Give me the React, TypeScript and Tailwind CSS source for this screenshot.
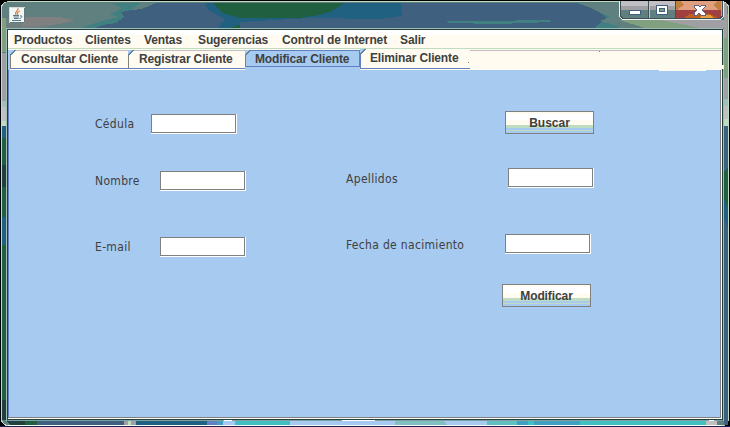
import type { ReactNode } from "react";

function Frame() {
  return (
    <svg className="absolute inset-0" width="730" height="427" shapeRendering="crispEdges">
      <rect width="730" height="427" fill="#000008" />
      <rect x="1" y="1" width="728" height="425" rx="7" fill="#c0dcc0" />
      <rect x="2" y="2" width="726" height="423" rx="6" fill="#608080" />
      <path d="M0 1.500H730" stroke="#000" />
      <path d="M2 28V18H73V21L60 24L40 28Z" fill="#708080" />
      <path d="M22 17H60L73 21L60 24L22 27Z" fill="#808080" />
      <path d="M112 3H141L132 9L121 14L124 18L108 28H80L102 21L118 17L110 14L122 8Z" fill="#408080" />
      <path d="M156 3H607V28H94L103 25L116 23L124 17L121 12L132 10L142 9Z" fill="#406080" />
      <path d="M205 3H401L402 17L394 21L380 28H218L225 19L208 10Z" fill="#206080" />
      <path d="M212 3H345L330 12L319 15L300 18H240L222 13Z" fill="#206040" />
      <path d="M230 28L238 25L251 28Z" fill="#206040" />
      <path d="M240 22L310 18L380 19L402 16V28H240Z" fill="#406080" />
      <path d="M447 21H482L550 20L551 22L500 24L448 23Z" fill="#408080" />
      <path d="M576 3H600L619 18L620 28H594L607 18L597 10Z" fill="#408080" />
      <path d="M580 3H619V28H625L600 21L610 17Z" fill="#608080" />
      <path d="M619 20H660L700 28H645Z" fill="#80a080" />
      <path d="M661 20H724V28H700Z" fill="#a0a0a4" />
      <rect x="2" y="18" width="4" height="34" fill="#80a080" />
      <rect x="2" y="53" width="4" height="48" fill="#a0a0a4" />
      <rect x="2" y="101" width="4" height="6" fill="#a0c0c0" />
      <rect x="2" y="107" width="4" height="14" fill="#c0c0c0" />
      <rect x="2" y="121" width="4" height="5" fill="#c0dcc0" />
      <rect x="2" y="126" width="4" height="12" fill="#206080" />
      <rect x="2" y="138" width="4" height="27" fill="#206040" />
      <rect x="2" y="165" width="4" height="22" fill="#204040" />
      <rect x="2" y="187" width="4" height="30" fill="#206040" />
      <rect x="2" y="217" width="4" height="28" fill="#206080" />
      <rect x="2" y="245" width="4" height="155" fill="#206040" />
      <rect x="2" y="400" width="4" height="20" fill="#204040" />
      <rect x="724" y="14" width="4" height="65" fill="#80a080" />
      <rect x="724" y="3" width="3" height="35" fill="#a0a0a4" />
      <rect x="724" y="78" width="4" height="21" fill="#a0a0a4" />
      <rect x="724" y="99" width="4" height="7" fill="#a0c0c0" />
      <rect x="724" y="106" width="4" height="13" fill="#c0c0c0" />
      <rect x="724" y="119" width="4" height="7" fill="#c0dcc0" />
      <rect x="724" y="126" width="4" height="299" fill="#406080" />
      <path d="M724 171L728 167V207L724 199Z" fill="#206040" />
      <path d="M724 199L728 207V228L724 218Z" fill="#206080" />
      <rect x="728" y="8" width="1" height="140" fill="#c0dcc0" />
      <rect x="729" y="8" width="1" height="419" fill="#000" />
      <path d="M6 421H25V425H10Z" fill="#204040" />
      <rect x="25" y="421" width="12" height="4" fill="#206040" />
      <rect x="37" y="421" width="87" height="4" fill="#406080" />
      <rect x="124" y="421" width="12" height="4" fill="#a0a0a4" />
      <rect x="128" y="420" width="3" height="5" fill="#c0dcc0" />
      <rect x="136" y="421" width="71" height="4" fill="#206080" />
      <rect x="207" y="421" width="10" height="4" fill="#6080c0" />
      <rect x="217" y="421" width="6" height="4" fill="#40a0c0" />
      <rect x="223" y="421" width="13" height="4" fill="#a6caf0" />
      <rect x="235" y="421" width="55" height="4" fill="#40c0c0" />
      <rect x="290" y="421" width="197" height="4" fill="#a6caf0" />
      <path d="M395 421H443L447 425H395Z" fill="#80c0c0" />
      <rect x="487" y="421" width="30" height="4" fill="#60c0c0" />
      <rect x="517" y="421" width="67" height="4" fill="#40a0c0" />
      <rect x="528" y="421" width="6" height="4" fill="#40c0c0" />
      <rect x="580" y="421" width="126" height="4" fill="#40c0c0" />
      <rect x="706" y="421" width="11" height="4" fill="#c0c0c0" />
      <path d="M8 420.500H722" stroke="#80a0a4" />
      <path d="M224 420.500H232M342 420.500H375M709 420.500H714" stroke="#fff" />
      <path d="M8 425.500H722" stroke="#f6fff8" />
      <path d="M0 426.500H730" stroke="#202050" />
      <path d="M7 1.500H722" stroke="#c0dcc0" />
      <path d="M0 0.500H730" stroke="#000" />
      <path d="M6.500 28V421M7 28.500H723M723.500 29V421" stroke="#a0bdb5" />
    </svg>
  );
}

function JavaIcon() {
  return (
    <svg className="mt-[7px] ml-[8px]" width="16" height="16" viewBox="0 0 16 16">
      <rect x=".5" y=".5" width="15" height="15" fill="#f4f6f3" stroke="#d3dbd8" />
      <path d="M1 15.500H15.500V1" fill="none" stroke="#607b80" />
      <path d="M9 1C10 4 5 4 7 8M11 4C8 5 8 6 9 8" fill="none" stroke="#d47f45" strokeWidth="1.200" />
      <path d="M4 8.500H10M4.500 10H10M5 11.500H9.500M3 13.500H12M11 9C14 8 13 11 10.500 11.500" fill="none" stroke="#52798c" />
    </svg>
  );
}

function WindowControls() {
  return (
    <svg className="mr-[6px] ml-auto" width="105" height="21" viewBox="0 0 105 21" shapeRendering="crispEdges">
      <path d="M1 1H103V16Q103 18 101 18H4Q1 18 1 15Z" fill="#608080" />
      <path d="M1 1H57V6H1Z" fill="#c0c0c4" />
      <path d="M1 6H57V10H1Z" fill="#a0a0a4" />
      <path d="M57 1H103V10H57Z" fill="#e0a080" />
      <path d="M57 1H62L65 5L58 10H57ZM103 1H99L94 5L100 10H103Z" fill="#c08040" />
      <path d="M57 10H103V18H57Z" fill="#a04040" />
      <path d="M65 18L71 14H91L99 18Z" fill="#c06020" />
      <path d="M80 18L83 15H91L95 18Z" fill="#e0a040" />
      <path d="M102.500 1V17" stroke="#e0a040" />
      <path d="M.5 1V16L3.500 19.500H101L104.500 16V1" fill="none" stroke="#e8efec" />
      <path d="M1.500 1V16L4 18.500H101L103.500 16V1M29.500 1V18M56.500 1V18" fill="none" stroke="#405058" />
      <path d="M30.500 1V18" stroke="#bdc7c7" />
      <rect x="10.500" y="10.500" width="11" height="4" fill="#fff" stroke="#406080" />
      <rect x="37.500" y="5.500" width="11" height="9" fill="#fff" stroke="#406080" />
      <rect x="40.500" y="8.500" width="5" height="3" fill="#80a080" stroke="#406080" />
      <path d="M75 5H79L81 7L83 5H86V7L83 10L86 13V15H82L80 13L78 15H75V13L78 10L75 7Z" fill="#fff" stroke="#606080" />
    </svg>
  );
}

function Tab({ children, className }: { children: ReactNode; className: string }) {
  return (
    <div className={`relative shrink-0 tracking-[-0.14px] whitespace-nowrap ${className}`}>
      <svg className="absolute -top-px -left-px" width="6" height="6" shapeRendering="crispEdges">
        <path d="M0 0H6L0 6Z" fill="#a6caf0" />
        <path d="M0 5.500L5.500 0" stroke="#6080a0" />
      </svg>
      {children}
    </div>
  );
}

function Field({ className = "" }: { className?: string }) {
  return (
    <div className={`h-5 w-[86px] shrink-0 border-r border-b border-white ${className}`}>
      <input className="block h-[19px] w-[85px] rounded-none border border-[#808080] bg-white px-1 text-xs outline-none" />
    </div>
  );
}

function Button({ children, className = "" }: { children: string; className?: string }) {
  return (
    <button
      className={`h-[23px] w-[89px] shrink-0 border border-[#808080] bg-[linear-gradient(#fffbf0_0_2px,#fff_2px_8px,#fffbf0_8px_13px,#c0dcc0_13px_16px,#a6caf0_16px_18px,#c0dcc0_18px_19px,#a6caf0_19px)] pt-px text-center font-['Liberation_Sans',sans-serif] text-xs leading-[20px] font-bold ${className}`}
    >
      {children}
    </button>
  );
}

export default function App() {
  return (
    <div className="relative h-[427px] w-[730px] overflow-hidden font-['Liberation_Sans',sans-serif] text-xs font-bold text-[#404040]">
      <Frame />
      <div className="relative flex h-full flex-col pl-[7px]">
        <header className="flex h-[29px] shrink-0 items-start">
          <div className="-ml-[7px] pl-px"><JavaIcon /></div>
          <WindowControls />
        </header>
        <main className="relative flex h-[391px] w-[716px] flex-col border border-[#204040] bg-[#fffbf0]">
          <nav className="flex h-[19px] shrink-0 border-b border-[#c0dcc0] bg-[linear-gradient(#fff_0_5px,#fffbf0_5px)] pl-[6px] leading-[20px] tracking-[-0.12px] whitespace-nowrap">
            <span className="w-[71px]">Productos</span>
            <span className="w-[59px]">Clientes</span>
            <span className="w-[54px]">Ventas</span>
            <span className="w-[84px]">Sugerencias</span>
            <span className="w-[118px]">Control de Internet</span>
            <span>Salir</span>
          </nav>
          <div className="flex h-[21px] shrink-0 pt-px">
            <div className="h-5 w-[2px] bg-[#a6caf0]" />
            <Tab className="h-[19px] w-[118px] border-t border-b border-l border-t-[#c0c0c0] border-b-[#6080c0] border-l-[#808080] pl-[10px] leading-[16px]">Consultar Cliente</Tab>
            <Tab className="h-[19px] w-[117px] border-t border-b border-l border-t-[#c0c0c0] border-b-[#6080c0] border-l-[#808080] pl-[10px] leading-[16px]">Registrar Cliente</Tab>
            <div className="h-5 w-[115px] bg-[#a6caf0]">
              <Tab className="h-[17px] border border-[#6080c0] pl-[9px] leading-[16px]">Modificar Cliente</Tab>
            </div>
            <Tab className="h-[19px] w-[110px] border-b border-l border-[#6080c0] pl-[9px] leading-[17px]">Eliminar Cliente</Tab>
            <div className="h-px flex-1 bg-[#c0c0c0]" />
          </div>
          <section className="mr-px mb-px flex-1 border-r border-b border-l border-r-[#808080] border-b-[#808080] border-l-[#6080c0] bg-[#a6caf0] font-['DejaVu_Sans_Condensed','DejaVu_Sans',sans-serif] font-normal tracking-[0.32px]">
            <div className="mr-[14px] ml-auto h-px w-[47px] bg-[#fffbf0]" />
            <div className="mt-[40px] ml-[86px] flex h-[23px]">
              <label className="w-[56px] pt-[5px] leading-4">Cédula</label>
              <Field className="mt-[3px]" />
              <Button className="ml-[268px] tracking-normal">Buscar</Button>
            </div>
            <div className="mt-[34px] ml-[86px] flex h-[23px]">
              <label className="w-[65px] pt-[5px] leading-4">Nombre</label>
              <Field className="mt-[3px]" />
              <label className="ml-[100px] w-[162px] pt-[3px] leading-4">Apellidos</label>
              <Field />
            </div>
            <div className="mt-[43px] ml-[86px] flex h-[23px]">
              <label className="w-[65px] pt-[5px] leading-4">E-mail</label>
              <Field className="mt-[3px]" />
              <label className="ml-[100px] w-[159px] pt-[3px] leading-4">Fecha de nacimiento</label>
              <Field />
            </div>
            <div className="mt-[27px] flex pl-[493px]">
              <Button className="tracking-[-0.1px]">Modificar</Button>
            </div>
          </section>
          <div className="absolute top-[35px] -right-[2px] h-1 w-[3px] bg-[#fffbf0]" />
          <div className="absolute top-[21px] left-[591px] size-px bg-[#808080]" />
          <div className="absolute top-[32px] left-[460px] size-px bg-[#808080]" />
        </main>
      </div>
    </div>
  );
}
